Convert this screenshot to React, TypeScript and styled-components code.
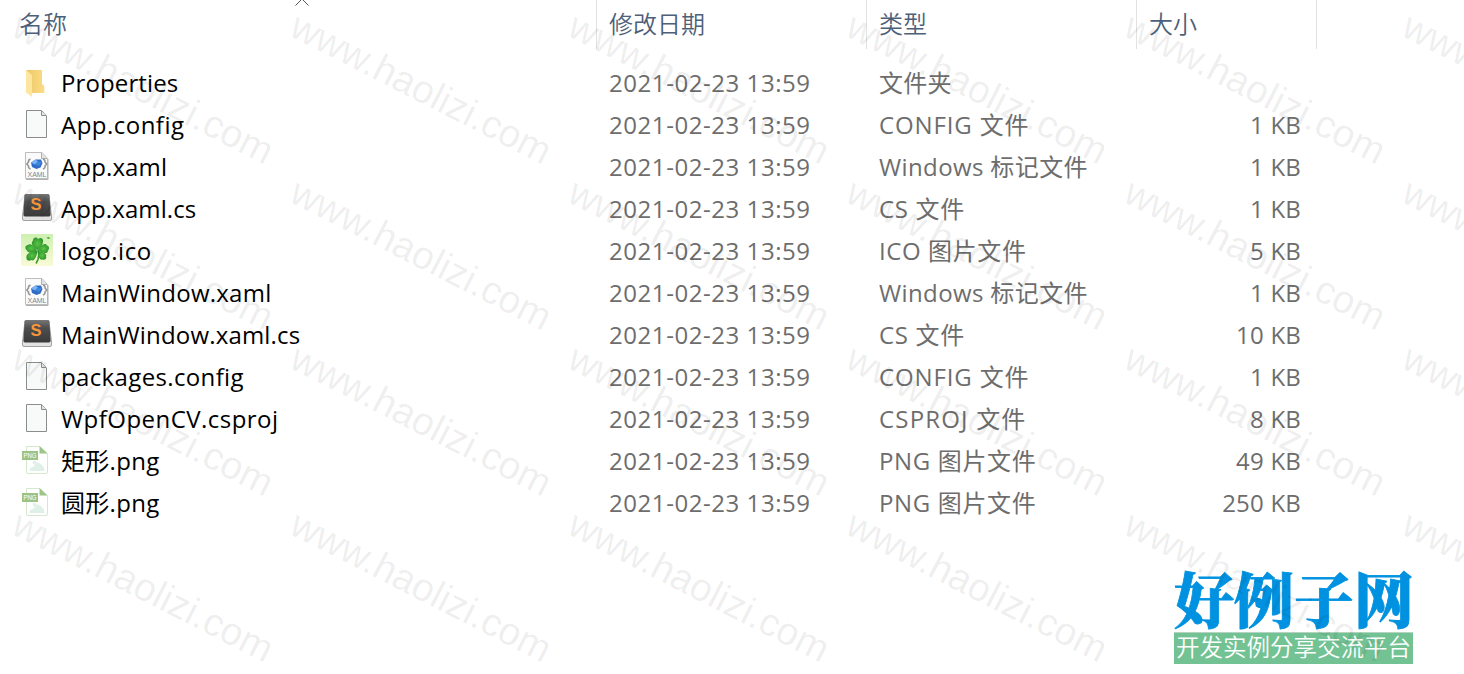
import styled, { createGlobalStyle } from 'styled-components';

type IconKind = 'folder' | 'blank' | 'xaml' | 'code' | 'clover' | 'png';

interface IText {
	text: string;
	tracking: number;
}

interface IFile {
	icon: IconKind;
	name: IText;
	type: IText;
	size?: string;
}

const DATE = '2021-02-23 13:59';

const CONFIG: IText = { text: 'CONFIG 文件', tracking: 0.86 };
const MARKUP: IText = { text: 'Windows 标记文件', tracking: 0.38 };
const CS: IText = { text: 'CS 文件', tracking: 0.7 };
const ICO: IText = { text: 'ICO 图片文件', tracking: 0.6 };
const CSPROJ: IText = { text: 'CSPROJ 文件', tracking: 1.18 };
const PNG: IText = { text: 'PNG 图片文件', tracking: 0.64 };

const files: IFile[] = [
	{ icon: 'folder', name: { text: 'Properties', tracking: 0.12 }, type: { text: '文件夹', tracking: 0.2 } },
	{ icon: 'blank', name: { text: 'App.config', tracking: 0.48 }, type: CONFIG, size: '1 KB' },
	{ icon: 'xaml', name: { text: 'App.xaml', tracking: 0.14 }, type: MARKUP, size: '1 KB' },
	{ icon: 'code', name: { text: 'App.xaml.cs', tracking: 0.1 }, type: CS, size: '1 KB' },
	{ icon: 'clover', name: { text: 'logo.ico', tracking: 0.55 }, type: ICO, size: '5 KB' },
	{ icon: 'xaml', name: { text: 'MainWindow.xaml', tracking: 0.24 }, type: MARKUP, size: '1 KB' },
	{ icon: 'code', name: { text: 'MainWindow.xaml.cs', tracking: 0.18 }, type: CS, size: '10 KB' },
	{ icon: 'blank', name: { text: 'packages.config', tracking: 0.36 }, type: CONFIG, size: '1 KB' },
	{ icon: 'blank', name: { text: 'WpfOpenCV.csproj', tracking: 0.46 }, type: CSPROJ, size: '8 KB' },
	{ icon: 'png', name: { text: '矩形.png', tracking: 0.3 }, type: PNG, size: '49 KB' },
	{ icon: 'png', name: { text: '圆形.png', tracking: 0.3 }, type: PNG, size: '250 KB' },
];

const WATERMARK_COUNT = 24;

const FileIcon = ({ kind }: { kind: IconKind }) => {
	if (kind === 'folder')
		return (
			<Icon viewBox="0 0 32 32">
				<defs>
					<linearGradient id="folderBack" x1="0" x2="1">
						<stop offset="0" stopColor="#edc767" />
						<stop offset="1" stopColor="#fbdc85" />
					</linearGradient>
				</defs>
				<path d="M5 4H21V18L23.3 20V27H9Z" fill="url(#folderBack)" />
				<path d="M5 4L11 9V31L5 26.5Z" fill="#ffe6a0" />
			</Icon>
		);

	if (kind === 'blank')
		return (
			<Icon viewBox="0 0 32 32">
				<path d="M5.5 2.5H20.5L25.5 8V29.5H5.5Z" fill="#f8faf9" stroke="#8b8d8c" />
				<path d="M20.5 3V7.5H25" fill="#e4e6e5" stroke="#8b8d8c" />
			</Icon>
		);

	if (kind === 'xaml')
		return (
			<Icon viewBox="0 0 32 32">
				<path d="M4.5 2.5H21L26.5 8.5V28.5H4.5Z" fill="#fafafa" stroke="#bdbdbd" />
				<path d="M27 9V29.5H5" fill="none" stroke="#b0b0b0" />
				<path d="M20.5 3V8.5H26" fill="#e2e2e2" stroke="#b0b0b0" />
				<path d="M9.5 9Q7 10 7.5 12L5.8 14L7.5 16Q7 18 9.5 19M22 9Q24.5 10 24 12L25.7 14L24 16Q24.5 18 22 19" fill="none" stroke="#969696" strokeWidth="1.5" />
				<path d="M10 12.5L14.5 9.5L20 9.5L21.5 13L19.5 17.5L15.5 19L11 17Z" fill="#2f6cc8" />
				<path d="M10 12.5L14.5 9.5L17 11.5L14 14.5Z" fill="#7db4f3" />
				<path d="M14 14.5L17 11.5L21 12L18 16Z" fill="#3f86de" />
				<Tag x="6.5" y="27" textLength="19" lengthAdjust="spacingAndGlyphs" fill="#858585">
					XAML
				</Tag>
			</Icon>
		);

	if (kind === 'code')
		return (
			<Icon viewBox="0 0 32 32">
				<defs>
					<linearGradient id="keycap" x1="0" y1="0" x2="0" y2="1">
						<stop offset="0" stopColor="#777" />
						<stop offset="0.35" stopColor="#4e4e4e" />
						<stop offset="1" stopColor="#3a3a3a" />
					</linearGradient>
				</defs>
				<path d="M4 3L1.5 24V27Q1.5 28.5 3 28.5H29Q30.5 28.5 30.5 27V24L28 3Z" fill="#e2e2e2" stroke="#8c8c8c" strokeWidth="0.8" />
				<path d="M5 2H27Q28.2 2 28.4 3.2L29.6 22.5Q29.6 24.5 28 24.5H4Q2.4 24.5 2.4 22.5L3.6 3.2Q3.8 2 5 2Z" fill="url(#keycap)" />
				<Letter x="9.6" y="18" textLength="11" lengthAdjust="spacingAndGlyphs">
					S
				</Letter>
			</Icon>
		);

	if (kind === 'clover')
		return (
			<Icon viewBox="0 0 32 32">
				<defs>
					<linearGradient id="cloverBg" x1="0" y1="0" x2="0" y2="1">
						<stop offset="0" stopColor="#cdf0b0" />
						<stop offset="1" stopColor="#fafbd8" />
					</linearGradient>
					<radialGradient id="leaf" cx="0.5" cy="0.5" r="0.6">
						<stop offset="0" stopColor="#5cc445" />
						<stop offset="1" stopColor="#26902b" />
					</radialGradient>
				</defs>
				<path d="M0 0H32V32H0Z" fill="url(#cloverBg)" />
				<path d="M17 16Q19 24 15 29.5" fill="none" stroke="#3f9b2c" strokeWidth="1.6" />
				<path d="M16.5 16C11 13 9.5 9 12 6.5C12 3.5 15.5 2.5 17 5C20 2.5 23 5 22 8C22 11 19 14 16.5 16Z" fill="url(#leaf)" />
				<path d="M17 16C20 10.5 24.5 8.5 26 11.5C28.5 12 28.5 15 27 16.5C27 20 22 20 17 16Z" fill="url(#leaf)" />
				<path d="M16 16C12 10.5 8.5 9 7 11C4 11 3.5 15 6 16.5C7 19.5 12 19 16 16Z" fill="url(#leaf)" />
				<path d="M16.5 16.5C10 17 4.5 20 5.5 23.5C5 26.5 8.5 27.5 10 26C13.5 28 16 22 16.5 16.5Z" fill="url(#leaf)" />
				<path d="M17 17C16.5 22 18.5 26.5 21.5 25.5C24 26.5 26 24.5 25 22.5C26.5 19.5 21 17.5 17 17Z" fill="url(#leaf)" />
				<path d="M25.5 3.5L28 3L29 4.5L27 5Z" fill="#4aa83a" />
			</Icon>
		);

	return (
		<Icon viewBox="0 0 32 32">
			<path d="M5.5 2.5H19L26.5 10V28Q26.5 29.5 25 29.5H7Q5.5 29.5 5.5 28Z" fill="#fff" stroke="#d5e8cf" />
			<path d="M18.5 2L26.5 9.5H18.5Z" fill="#9cc688" />
			<circle cx="13.5" cy="18.5" r="1.8" fill="#e0f0ea" />
			<path d="M8.5 27Q9 22.5 12.5 23Q15 16.5 19 19.5Q23.5 22 23.5 27Z" fill="#def0e8" />
			<path d="M1 7H17V16H1Z" fill="#9cc285" />
			<Tag x="2.5" y="14" textLength="13" lengthAdjust="spacingAndGlyphs" fill="#fff">
				PNG
			</Tag>
		</Icon>
	);
};

const App = () => {
	return (
		<Page>
			<GlobalStyle />
			<Header>
				<HeaderCell>
					名称
					<SortArrow viewBox="0 0 14 7">
						<path d="M0.5 6.5L7 0L13.5 6.5" fill="none" stroke="#555" />
					</SortArrow>
				</HeaderCell>
				<HeaderCell>修改日期</HeaderCell>
				<HeaderCell>类型</HeaderCell>
				<HeaderCell>大小</HeaderCell>
			</Header>
			<List>
				{files.map(({ icon, name, type, size }) => (
					<Row key={name.text}>
						<NameCell $tracking={name.tracking}>
							<FileIcon kind={icon} />
							<span>{name.text}</span>
						</NameCell>
						<Cell $tracking={0.56}>{DATE}</Cell>
						<Cell $tracking={type.tracking}>{type.text}</Cell>
						<SizeCell>{size}</SizeCell>
					</Row>
				))}
			</List>
			<Brand>
				<BrandName>好例子网</BrandName>
				<BrandSlogan>开发实例分享交流平台</BrandSlogan>
			</Brand>
			<Watermarks>
				{Array.from({ length: WATERMARK_COUNT }, (_, i) => (
					<Watermark key={i}>www.haolizi.com</Watermark>
				))}
			</Watermarks>
		</Page>
	);
};

const GlobalStyle = createGlobalStyle`
	body {
		margin: 0;
		background: #fff;
		overflow: hidden;
	}
`;

const COLUMNS = '597px 270px 270px 180px';

const Page = styled.main`
	position: relative;
	display: flex;
	flex-direction: column;
	width: 1464px;
	height: 674px;
	overflow: hidden;
	font-family: 'Open Sans', 'Noto Sans CJK SC', sans-serif;
	font-size: 24px;
	font-weight: 400;
	white-space: nowrap;
`;

const Header = styled.header`
	display: grid;
	grid-template-columns: ${COLUMNS};
	height: 49px;
	color: #4c607a;
	font-family: 'Noto Sans CJK SC', sans-serif;
	font-weight: 350;
`;

const HeaderCell = styled.div`
	position: relative;
	box-sizing: border-box;
	padding-left: 12px;
	border-right: 1px solid #e2e2e2;
	line-height: 46px;

	&:first-child {
		padding-left: 19px;
	}
`;

const SortArrow = styled.svg`
	position: absolute;
	top: -1px;
	left: 295px;
	width: 14px;
	height: 7px;
`;

const List = styled.section`
	margin-top: 13px;
`;

const Row = styled.div`
	display: grid;
	grid-template-columns: ${COLUMNS};
	height: 42px;
	color: #6d6d6d;
	line-height: 42px;
`;

const Cell = styled.div<{ $tracking: number }>`
	padding-left: 12px;
	letter-spacing: ${({ $tracking }) => $tracking}px;
`;

const NameCell = styled(Cell)`
	display: flex;
	gap: 8px;
	padding-left: 21px;
	color: #000;
`;

const SizeCell = styled.div`
	padding-right: 16px;
	letter-spacing: 0.2px;
	text-align: right;
`;

const Icon = styled.svg`
	flex: none;
	width: 32px;
	height: 32px;
	margin-top: 4px;
	letter-spacing: 0;
`;

const Tag = styled.text`
	font-family: 'Liberation Sans', sans-serif;
	font-size: 7.5px;
`;

const Letter = styled.text`
	fill: #f8963a;
	font-family: 'Liberation Sans', sans-serif;
	font-size: 17px;
	font-weight: bold;
`;

const Brand = styled.aside`
	align-self: flex-end;
	width: 239px;
	margin: 43px 51px 0 0;
`;

const BrandName = styled.div`
	height: 65px;
	color: #0092e0;
	font-family: 'Noto Serif CJK SC', 'Noto Sans CJK SC', serif;
	font-size: 60px;
	font-weight: 900;
	line-height: 61px;
	-webkit-text-stroke: 0.8px #0092e0;
`;

const BrandSlogan = styled.div`
	height: 31px;
	border-top: 1px solid #b5d3c1;
	background: #72c293;
	color: #fff;
	font-size: 23.5px;
	font-weight: 350;
	line-height: 29px;
	text-align: center;
`;

const Watermarks = styled.div`
	position: absolute;
	top: 0;
	left: 0;
	display: grid;
	grid-template-columns: repeat(6, 278px);
	grid-auto-rows: 166px;
	pointer-events: none;
`;

const Watermark = styled.span`
	padding-left: 10px;
	color: rgba(0, 0, 0, 0.075);
	font-family: 'Liberation Sans', sans-serif;
	font-size: 38.8px;
	line-height: 43px;
	transform: rotate(27deg);
	transform-origin: 10px 34px;
`;

export default App;
